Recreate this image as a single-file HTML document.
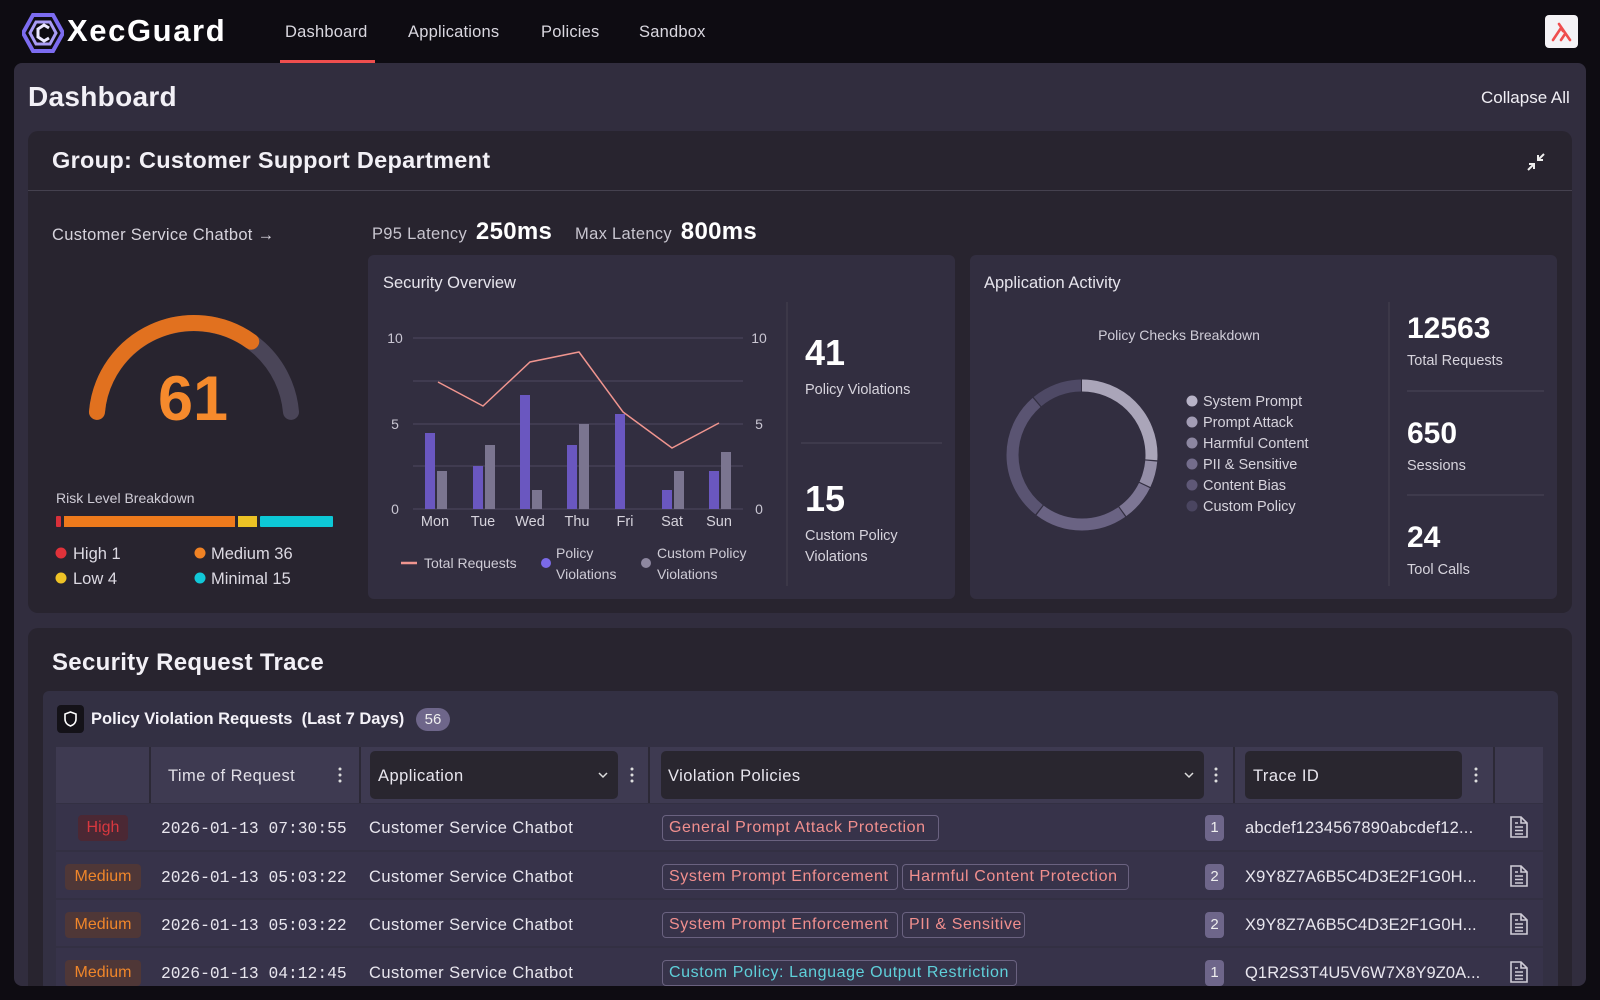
<!DOCTYPE html>
<html><head><meta charset="utf-8"><style>
*{margin:0;padding:0;box-sizing:border-box}
body{width:1600px;height:1000px;background:#0e0c12;font-family:"Liberation Sans",sans-serif;color:#e8e6ee;position:relative;overflow:hidden}
.a{position:absolute}
.nav{font-size:16.5px;color:#d9d7df;top:23px;letter-spacing:0.2px}
.card{position:absolute;border-radius:10px}
.t{position:absolute;white-space:nowrap}
.mono{font-family:"Liberation Mono",monospace}
.tag{position:absolute;height:26px;border:1.5px solid #6a6280;border-radius:4px;font-size:16px;line-height:23px;padding:0 6px;color:#f18f8e;white-space:nowrap;background:#37334a;letter-spacing:0.6px}
.cy{color:#5fd0da}
.cnt{position:absolute;left:1205px;width:19px;height:26px;background:#6e668a;border-radius:4px;font-size:15px;text-align:center;line-height:26px;color:#eee}
.sev{position:absolute;height:26px;border-radius:4px;font-size:16px;line-height:26px;text-align:center}
.row{position:absolute;left:56px;width:1487px;height:46px;background:#37334a}
.cell{position:absolute;font-size:16.5px;white-space:nowrap;letter-spacing:0.45px}
</style></head><body>
<svg class="a" style="left:22px;top:13px" width="42" height="40" viewBox="0 0 42 40">
<polygon points="11,2 31,2 41,20 31,38 11,38 1,20" fill="none" stroke="#7c6cf0" stroke-width="4"/>
<polygon points="14,9 28,9 34,20 28,31 14,31 8,20" fill="none" stroke="#a99cf5" stroke-width="3"/>
<path d="M27 15 L22 12 L16 16 L16 24 L22 28 L27 25" fill="none" stroke="#ece9ff" stroke-width="3"/>
</svg>
<div class="t" style="left:67px;top:13px;font-size:31px;font-weight:bold;color:#fff;letter-spacing:1.6px">XecGuard</div>
<div class="t nav" style="left:285px">Dashboard</div>
<div class="t nav" style="left:408px">Applications</div>
<div class="t nav" style="left:541px">Policies</div>
<div class="t nav" style="left:639px">Sandbox</div>
<div class="a" style="left:280px;top:60px;width:95px;height:3px;background:#ef4e4e"></div>
<div class="a" style="left:1545px;top:15px;width:33px;height:33px;background:#f4f3f6;border-radius:4px"></div>
<svg class="a" style="left:1551px;top:21px" width="22" height="22" viewBox="0 0 22 22"><path d="M2 19 L10 7 L12 10 M8 3 L19 19 M10 19 L14 13" stroke="#ef4e4e" stroke-width="2.6" fill="none" stroke-linecap="round"/></svg>

<div class="card" style="left:14px;top:63px;width:1572px;height:923px;background:#312d3e;border-radius:8px"></div>
<div class="t" style="left:28px;top:81px;font-size:28px;font-weight:bold;color:#f2f0f6;letter-spacing:0.3px">Dashboard</div>
<div class="t" style="left:1481px;top:88px;font-size:17px;color:#f0eef4">Collapse All</div>

<div class="card" style="left:28px;top:131px;width:1544px;height:482px;background:#28242f"></div>
<div class="t" style="left:52px;top:147px;font-size:23.5px;font-weight:bold;color:#f2f0f6;letter-spacing:0.3px">Group: Customer Support Department</div>
<svg class="a" style="left:1525px;top:151px" width="22" height="22" viewBox="0 0 22 22"><path d="M3 19 L9 13 M4 13 H9 V18 M19 3 L13 9 M13 4 V9 H18" stroke="#eee" stroke-width="2" fill="none"/></svg>
<div class="a" style="left:28px;top:190px;width:1544px;height:1px;background:#45414f"></div>
<div class="t" style="left:52px;top:226px;font-size:16.5px;color:#d6d3dc;letter-spacing:0.3px">Customer Service Chatbot →</div>
<div class="t" style="left:372px;top:218px;font-size:16.5px;color:#c8c5cf;letter-spacing:0.3px">P95 Latency <b style="font-size:24px;color:#fff;margin-left:4px">250ms</b> <span style="margin-left:18px">Max Latency</span> <b style="font-size:24px;color:#fff;margin-left:4px">800ms</b></div>

<div class="card" style="left:368px;top:255px;width:587px;height:344px;background:#322e40;border-radius:6px"></div>
<div class="card" style="left:970px;top:255px;width:587px;height:344px;background:#322e40;border-radius:6px"></div>

<svg class="a" style="left:0;top:0" width="1600" height="1000">
<path d="M96.97 411.9 A97.4 97.4 0 0 1 291 411.9" fill="none" stroke="#4a4558" stroke-width="16" stroke-linecap="round"/>
<path d="M96.97 411.9 A97.4 97.4 0 0 1 251.25 341.6" fill="none" stroke="#e1711f" stroke-width="16" stroke-linecap="round"/>
<text x="193" y="420" text-anchor="middle" font-family="Liberation Sans" font-weight="bold" font-size="63" fill="#f68a2c">61</text>
<rect x="56" y="516" width="5" height="11" rx="1" fill="#d8303a"/>
<rect x="64" y="516" width="171" height="11" fill="#ee7a1c"/>
<rect x="238" y="516" width="19" height="11" fill="#ecc225"/>
<rect x="260" y="516" width="73" height="11" rx="1" fill="#0dc8d6"/>
<circle cx="61" cy="553" r="5.5" fill="#e0323a"/><circle cx="200" cy="553" r="5.5" fill="#f08224"/>
<circle cx="61" cy="578" r="5.5" fill="#eec226"/><circle cx="200" cy="578" r="5.5" fill="#11c8d8"/>
<g font-family="Liberation Sans" font-size="16.5" fill="#dcd9e2">
<text x="73" y="559">High 1</text><text x="211" y="559">Medium 36</text>
<text x="73" y="584">Low 4</text><text x="211" y="584">Minimal 15</text>
</g>
<text x="56" y="503" font-family="Liberation Sans" font-size="14" fill="#cfccd6">Risk Level Breakdown</text>

<text x="383" y="288" font-family="Liberation Sans" font-size="16.5" fill="#e6e4ec">Security Overview</text>
<g stroke="#48435a" stroke-width="1.2">
<line x1="413" y1="338" x2="743" y2="338"/><line x1="413" y1="381" x2="743" y2="381"/>
<line x1="413" y1="424" x2="743" y2="424"/><line x1="413" y1="466" x2="743" y2="466"/>
<line x1="413" y1="509" x2="743" y2="509"/>
</g>
<g font-family="Liberation Sans" font-size="14" fill="#c9c6d2">
<text x="395" y="343" text-anchor="middle">10</text><text x="395" y="429" text-anchor="middle">5</text><text x="395" y="514" text-anchor="middle">0</text>
<text x="759" y="343" text-anchor="middle">10</text><text x="759" y="429" text-anchor="middle">5</text><text x="759" y="514" text-anchor="middle">0</text>
</g>
<g fill="#6a57c0">
<rect x="425" y="433" width="10" height="76"/><rect x="473" y="466" width="10" height="43"/>
<rect x="520" y="395" width="10" height="114"/><rect x="567" y="445" width="10" height="64"/>
<rect x="615" y="414" width="10" height="95"/><rect x="662" y="490" width="10" height="19"/>
<rect x="709" y="471" width="10" height="38"/>
</g>
<g fill="#7b7590">
<rect x="437" y="471" width="10" height="38"/><rect x="485" y="445" width="10" height="64"/>
<rect x="532" y="490" width="10" height="19"/><rect x="579" y="424" width="10" height="85"/>
<rect x="674" y="471" width="10" height="38"/><rect x="721" y="452" width="10" height="57"/>
</g>
<polyline points="438,382 483,406 530,362 579,352 623,412 672,448 719,423" fill="none" stroke="#f0958f" stroke-width="1.5"/>
<g font-family="Liberation Sans" font-size="14.5" fill="#d6d3dc" text-anchor="middle">
<text x="435" y="526">Mon</text><text x="483" y="526">Tue</text><text x="530" y="526">Wed</text><text x="577" y="526">Thu</text><text x="625" y="526">Fri</text><text x="672" y="526">Sat</text><text x="719" y="526">Sun</text>
</g>
<line x1="401" y1="563" x2="417" y2="563" stroke="#f0958f" stroke-width="2.5"/>
<circle cx="546" cy="563" r="5" fill="#7b6ae8"/><circle cx="646" cy="563" r="5" fill="#8e88a0"/>
<g font-family="Liberation Sans" font-size="14" fill="#cfccd6">
<text x="424" y="568">Total Requests</text>
<text x="556" y="558">Policy</text><text x="556" y="579">Violations</text>
<text x="657" y="558">Custom Policy</text><text x="657" y="579">Violations</text>
</g>
<line x1="787" y1="302" x2="787" y2="586" stroke="#45414f"/>
<line x1="801" y1="443" x2="942" y2="443" stroke="#4a4658"/>
<text x="805" y="365" font-family="Liberation Sans" font-weight="bold" font-size="36" fill="#fff">41</text>
<text x="805" y="394" font-family="Liberation Sans" font-size="14.5" fill="#d6d3dc">Policy Violations</text>
<text x="805" y="511" font-family="Liberation Sans" font-weight="bold" font-size="36" fill="#fff">15</text>
<text x="805" y="540" font-family="Liberation Sans" font-size="14.5" fill="#d6d3dc">Custom Policy</text>
<text x="805" y="561" font-family="Liberation Sans" font-size="14.5" fill="#d6d3dc">Violations</text>

<text x="984" y="288" font-family="Liberation Sans" font-size="16.5" fill="#e6e4ec">Application Activity</text>
<text x="1179" y="340" text-anchor="middle" font-family="Liberation Sans" font-size="14" fill="#d0cdd8">Policy Checks Breakdown</text>
<g transform="rotate(-90 1082 455)" fill="none" stroke-width="12">
<circle cx="1082" cy="455" r="69.5" stroke="#aaa5b9" stroke-dasharray="114 400"/>
<circle cx="1082" cy="455" r="69.5" stroke="#948ea7" stroke-dasharray="24.3 420" stroke-dashoffset="-115.2"/>
<circle cx="1082" cy="455" r="69.5" stroke="#7d7694" stroke-dasharray="34 420" stroke-dashoffset="-140.7"/>
<circle cx="1082" cy="455" r="69.5" stroke="#6a6383" stroke-dasharray="87.3 420" stroke-dashoffset="-175.9"/>
<circle cx="1082" cy="455" r="69.5" stroke="#5a5472" stroke-dasharray="122.5 420" stroke-dashoffset="-264.5"/>
<circle cx="1082" cy="455" r="69.5" stroke="#4e4965" stroke-dasharray="47.3 420" stroke-dashoffset="-388.2"/>
</g>
<g font-family="Liberation Sans" font-size="14.5" fill="#d6d3dc">
<circle cx="1192" cy="401" r="5.5" fill="#b8b3c7"/><text x="1203" y="406">System Prompt</text>
<circle cx="1192" cy="422" r="5.5" fill="#a39db5"/><text x="1203" y="427">Prompt Attack</text>
<circle cx="1192" cy="443" r="5.5" fill="#8d87a1"/><text x="1203" y="448">Harmful Content</text>
<circle cx="1192" cy="464" r="5.5" fill="#746d8c"/><text x="1203" y="469">PII &amp; Sensitive</text>
<circle cx="1192" cy="485" r="5.5" fill="#5f5877"/><text x="1203" y="490">Content Bias</text>
<circle cx="1192" cy="506" r="5.5" fill="#4a4560"/><text x="1203" y="511">Custom Policy</text>
</g>
<line x1="1389" y1="302" x2="1389" y2="586" stroke="#45414f"/>
<line x1="1407" y1="391" x2="1544" y2="391" stroke="#4a4658"/>
<line x1="1407" y1="495" x2="1544" y2="495" stroke="#4a4658"/>
<g font-family="Liberation Sans" fill="#fff" font-weight="bold" font-size="30">
<text x="1407" y="338">12563</text><text x="1407" y="443">650</text><text x="1407" y="547">24</text>
</g>
<g font-family="Liberation Sans" font-size="14.5" fill="#d6d3dc">
<text x="1407" y="365">Total Requests</text><text x="1407" y="470">Sessions</text><text x="1407" y="574">Tool Calls</text>
</g>
</svg>

<div class="card" style="left:28px;top:628px;width:1544px;height:370px;background:#28242f"></div>
<div class="t" style="left:52px;top:649px;font-size:24px;font-weight:bold;color:#f2f0f6;letter-spacing:0.3px">Security Request Trace</div>
<div class="card" style="left:43px;top:691px;width:1515px;height:300px;background:#333043;border-radius:6px"></div>
<div class="a" style="left:57px;top:705px;width:27px;height:28px;background:#141218;border-radius:4px"></div>
<svg class="a" style="left:62px;top:710px" width="17" height="18" viewBox="0 0 17 18"><path d="M8.5 2 L14 4 V9 C14 12.5 11.5 15 8.5 16 C5.5 15 3 12.5 3 9 V4 Z" fill="none" stroke="#fff" stroke-width="1.6"/></svg>
<div class="t" style="left:91px;top:710px;font-size:16.5px;font-weight:bold;color:#f4f2f8">Policy Violation Requests&nbsp; (Last 7 Days)</div>
<div class="a" style="left:416px;top:708px;width:34px;height:23px;background:#6e668a;border-radius:12px;font-size:15px;text-align:center;line-height:23px;color:#eee">56</div>

<div class="a" style="left:56px;top:747px;width:1487px;height:56px;background:#3e3a51"></div>
<div class="a" style="left:149px;top:747px;width:2px;height:56px;background:#2c2936"></div>
<div class="a" style="left:359px;top:747px;width:2px;height:56px;background:#2c2936"></div>
<div class="a" style="left:648px;top:747px;width:2px;height:56px;background:#2c2936"></div>
<div class="a" style="left:1233px;top:747px;width:2px;height:56px;background:#2c2936"></div>
<div class="a" style="left:1493px;top:747px;width:2px;height:56px;background:#2c2936"></div>
<div class="a" style="left:370px;top:751px;width:248px;height:48px;background:#29262f;border-radius:5px"></div>
<div class="a" style="left:661px;top:751px;width:543px;height:48px;background:#29262f;border-radius:5px"></div>
<div class="a" style="left:1245px;top:751px;width:217px;height:48px;background:#29262f;border-radius:5px"></div>
<div class="cell" style="left:168px;top:767px;color:#e2e0e8">Time of Request</div>
<div class="cell" style="left:378px;top:767px;color:#e8e6ee">Application</div>
<div class="cell" style="left:668px;top:767px;color:#e8e6ee">Violation Policies</div>
<div class="cell" style="left:1253px;top:767px;color:#e8e6ee">Trace ID</div>
<svg class="a" style="left:0;top:0" width="1600" height="1000">
<g fill="#ddd"><circle cx="340" cy="769" r="1.5"/><circle cx="340" cy="775" r="1.5"/><circle cx="340" cy="781" r="1.5"/>
<circle cx="632" cy="769" r="1.5"/><circle cx="632" cy="775" r="1.5"/><circle cx="632" cy="781" r="1.5"/>
<circle cx="1216" cy="769" r="1.5"/><circle cx="1216" cy="775" r="1.5"/><circle cx="1216" cy="781" r="1.5"/>
<circle cx="1476" cy="769" r="1.5"/><circle cx="1476" cy="775" r="1.5"/><circle cx="1476" cy="781" r="1.5"/></g>
<path d="M599 773 L603 777 L607 773 M1185 773 L1189 777 L1193 773" stroke="#ddd" stroke-width="1.5" fill="none"/>
</svg>

<div class="row" style="top:804px"></div>
<div class="row" style="top:852px"></div>
<div class="row" style="top:900px"></div>
<div class="row" style="top:948px"></div>

<div class="sev" style="left:78px;top:815px;width:50px;background:#4b2834;color:#d8383f">High</div>
<div class="sev" style="left:65px;top:864px;width:76px;background:#4f3737;color:#f0862a">Medium</div>
<div class="sev" style="left:65px;top:912px;width:76px;background:#4f3737;color:#f0862a">Medium</div>
<div class="sev" style="left:65px;top:960px;width:76px;background:#4f3737;color:#f0862a">Medium</div>

<div class="cell mono" style="left:161px;top:819px;font-size:16.3px;letter-spacing:0">2026-01-13 07:30:55</div>
<div class="cell mono" style="left:161px;top:868px;font-size:16.3px;letter-spacing:0">2026-01-13 05:03:22</div>
<div class="cell mono" style="left:161px;top:916px;font-size:16.3px;letter-spacing:0">2026-01-13 05:03:22</div>
<div class="cell mono" style="left:161px;top:964px;font-size:16.3px;letter-spacing:0">2026-01-13 04:12:45</div>
<div class="cell" style="left:369px;top:819px">Customer Service Chatbot</div>
<div class="cell" style="left:369px;top:868px">Customer Service Chatbot</div>
<div class="cell" style="left:369px;top:916px">Customer Service Chatbot</div>
<div class="cell" style="left:369px;top:964px">Customer Service Chatbot</div>

<div class="tag" style="left:662px;top:815px;width:277px">General Prompt Attack Protection</div>
<div class="tag" style="left:662px;top:864px;width:236px">System Prompt Enforcement</div>
<div class="tag" style="left:902px;top:864px;width:227px">Harmful Content Protection</div>
<div class="tag" style="left:662px;top:912px;width:236px">System Prompt Enforcement</div>
<div class="tag" style="left:902px;top:912px;width:123px">PII &amp; Sensitive</div>
<div class="tag cy" style="left:662px;top:960px;width:355px">Custom Policy: Language Output Restriction</div>

<div class="cnt" style="top:815px">1</div>
<div class="cnt" style="top:864px">2</div>
<div class="cnt" style="top:912px">2</div>
<div class="cnt" style="top:960px">1</div>
<div class="cell" style="left:1245px;top:819px;letter-spacing:0.2px">abcdef1234567890abcdef12...</div>
<div class="cell" style="left:1245px;top:868px;letter-spacing:0.1px">X9Y8Z7A6B5C4D3E2F1G0H...</div>
<div class="cell" style="left:1245px;top:916px;letter-spacing:0.1px">X9Y8Z7A6B5C4D3E2F1G0H...</div>
<div class="cell" style="left:1245px;top:964px;letter-spacing:0.1px">Q1R2S3T4U5V6W7X8Y9Z0A...</div>
<svg class="a" style="left:0;top:0" width="1600" height="1000">
<defs><g id="doc"><path d="M1 1 H11 L17 7 V21 H1 Z M11 1 V7 H17 M5 11 H13 M5 14.5 H13 M5 18 H13 M5 7 H8" fill="none" stroke="#cfccd6" stroke-width="1.6"/></g></defs>
<use href="#doc" x="1510" y="816"/><use href="#doc" x="1510" y="865"/><use href="#doc" x="1510" y="913"/><use href="#doc" x="1510" y="961"/>
</svg>
<div class="a" style="left:0;top:986px;width:1600px;height:14px;background:#0e0c12"></div>
</body></html>
